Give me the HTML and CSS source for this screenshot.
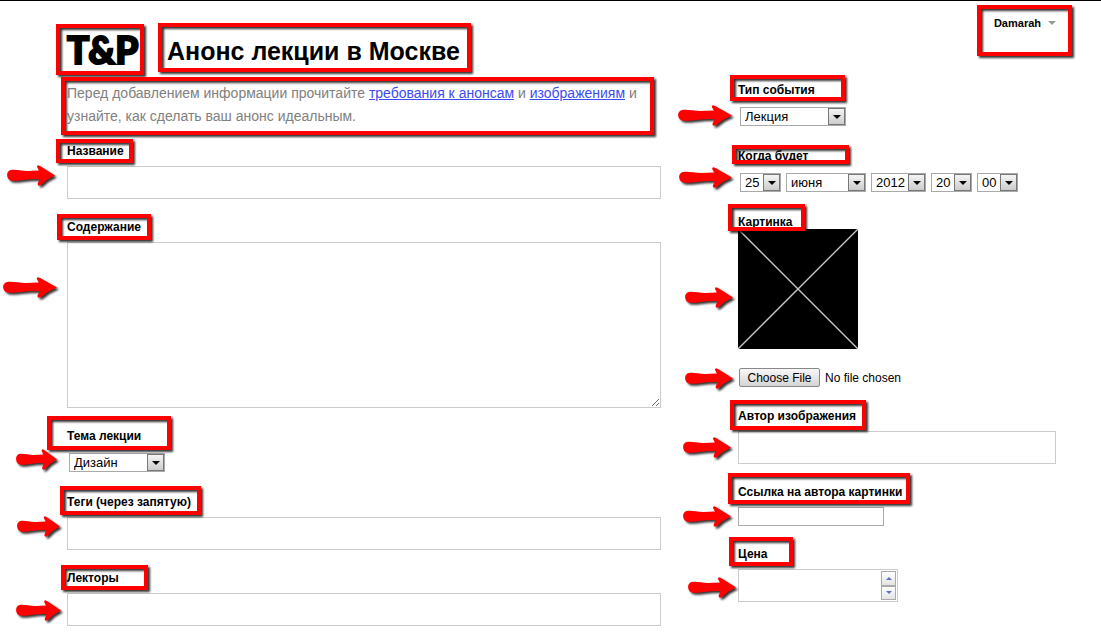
FILE: index.html
```html
<!DOCTYPE html>
<html lang="ru">
<head>
<meta charset="utf-8">
<meta name="viewport" content="width=device-width, initial-scale=1">
<title>Анонс лекции в Москве</title>
<link rel="stylesheet" href="styles.css">
</head>
<body>
<svg class="defs" aria-hidden="true">
  <symbol id="arrow" viewBox="0 0 48 21" preserveAspectRatio="none">
    <path d="M5 4.800C10 4.500 14 6 20 6L32 5.500L30 2Q30 -1 33 1Q41 6 48 10.500Q40 14 34 20Q31 22 30.500 19L32.500 14Q22 14 14 15.200Q9 16 5 15.800C-1.500 15 -1.500 5 5 4.800Z"/>
  </symbol>
</svg>
<form class="page">
  <main class="column">
    <header class="masthead">
      <a class="logo" href="#">T&amp;P<span class="mark mark-logo"></span></a>
      <h1 class="title">Анонс лекции в Москве<span class="mark mark-heading"></span></h1>
    </header>
    <p class="intro">Перед добавлением информации прочитайте <a href="#">требования к анонсам</a> и <a href="#">изображениям</a> и узнайте, как сделать ваш анонс идеальным.<span class="mark mark-intro"></span></p>
    <div class="fields">
      <div class="field">
        <label class="label" for="name">Название</label>
        <input class="text" id="name" type="text">
        <span class="mark mark-name"></span>
        <svg class="arrow arrow-name"><use href="#arrow"/></svg>
      </div>
      <div class="field">
        <label class="label" for="content">Содержание</label>
        <textarea class="text area" id="content"></textarea>
        <span class="mark mark-content"></span>
        <svg class="arrow arrow-content"><use href="#arrow"/></svg>
      </div>
      <div class="field">
        <label class="label" for="topic">Тема лекции</label>
        <div class="selects"><span class="select topic"><select id="topic"><option>Дизайн</option></select></span></div>
        <span class="mark mark-topic"></span>
        <svg class="arrow arrow-topic"><use href="#arrow"/></svg>
      </div>
      <div class="field">
        <label class="label" for="tags">Теги (через запятую)</label>
        <input class="text" id="tags" type="text">
        <span class="mark mark-tags"></span>
        <svg class="arrow arrow-tags"><use href="#arrow"/></svg>
      </div>
      <div class="field">
        <label class="label" for="lecturers">Лекторы</label>
        <input class="text" id="lecturers" type="text">
        <span class="mark mark-lecturers"></span>
        <svg class="arrow arrow-lecturers"><use href="#arrow"/></svg>
      </div>
    </div>
  </main>
  <aside class="column">
    <nav class="account">
      <a class="user" href="#">Damarah</a>
      <span class="mark mark-user"></span>
    </nav>
    <div class="fields">
      <div class="field">
        <label class="label" for="type">Тип события</label>
        <div class="selects"><span class="select type"><select id="type"><option>Лекция</option></select></span></div>
        <span class="mark mark-type"></span>
        <svg class="arrow arrow-type"><use href="#arrow"/></svg>
      </div>
      <div class="field">
        <label class="label" for="day">Когда будет</label>
        <div class="selects">
          <span class="select short"><select id="day"><option>25</option></select></span>
          <span class="select month"><select aria-label="Месяц"><option>июня</option></select></span>
          <span class="select year"><select aria-label="Год"><option>2012</option></select></span>
          <span class="select short"><select aria-label="Часы"><option>20</option></select></span>
          <span class="select short"><select aria-label="Минуты"><option>00</option></select></span>
        </div>
        <span class="mark mark-when"></span>
        <svg class="arrow arrow-when"><use href="#arrow"/></svg>
      </div>
      <div class="field">
        <label class="label label-tight" for="file">Картинка</label>
        <svg class="picture" viewBox="0 0 120 120" aria-hidden="true"><path d="M0 0H120V120H0Z"/><path class="cross" d="M0 0L120 120M120 0L0 120"/></svg>
        <input class="file" id="file" type="file">
        <span class="mark mark-picture"></span>
        <svg class="arrow arrow-picture"><use href="#arrow"/></svg>
        <svg class="arrow arrow-file"><use href="#arrow"/></svg>
      </div>
      <div class="field">
        <label class="label" for="author">Автор изображения</label>
        <input class="text" id="author" type="text">
        <span class="mark mark-author"></span>
        <svg class="arrow arrow-author"><use href="#arrow"/></svg>
      </div>
      <div class="field">
        <label class="label" for="link">Ссылка на автора картинки</label>
        <input class="text small" id="link" type="text">
        <span class="mark mark-link"></span>
        <svg class="arrow arrow-link"><use href="#arrow"/></svg>
      </div>
      <div class="field">
        <label class="label" for="price">Цена</label>
        <div class="number">
          <input id="price" type="number">
          <div class="steps">
            <button class="step up" type="button" aria-label="Больше"></button>
            <button class="step" type="button" aria-label="Меньше"></button>
          </div>
        </div>
        <span class="mark mark-price"></span>
        <svg class="arrow arrow-price"><use href="#arrow"/></svg>
      </div>
    </div>
  </aside>
</form>
</body>
</html>
```

FILE: styles.css
```css
*, ::before, ::after { box-sizing: border-box; }

body {
  margin: 0;
  border-top: 1px solid #000;
  background: #fff;
  color: #000;
  font-family: "Liberation Sans", Arial, sans-serif;
  font-size: 13px;
}

input, select, textarea, button { font: inherit; color: inherit; margin: 0; border-radius: 0; }

.defs { position: absolute; width: 0; height: 0; }

.page {
  display: grid;
  grid-template-columns: minmax(0, 594fr) minmax(0, 318fr);
  column-gap: 77px;
  padding: 0 45px 12px 67px;
}

/* Header */
.masthead { display: flex; align-items: flex-start; height: 81px; padding-top: 34px; }
.logo {
  position: relative;
  flex: 0 0 100px;
  color: #000;
  font-family: Lato, "Liberation Sans", sans-serif;
  font-size: 37px;
  font-weight: 900;
  line-height: 30px;
  text-decoration: none;
  -webkit-text-stroke: 2px #000;
}
.title { position: relative; margin: 0; font-size: 25px; line-height: 32px; white-space: nowrap; }
.account { position: relative; display: flex; justify-content: flex-end; height: 81px; padding-top: 14px; }
.user {
  display: flex;
  align-items: center;
  gap: 7px;
  height: 16px;
  color: #000;
  font-size: 11px;
  font-weight: bold;
  text-decoration: none;
}
.user::after { content: ""; border: 4px solid transparent; border-top-color: #999; border-bottom: 0; }

.intro { position: relative; margin: 0 0 15px; color: #808080; font-size: 14px; line-height: 23px; }
.intro a { color: #3d4cf0; }

/* Form */
.fields { display: flex; flex-direction: column; gap: 20px; }
.field { position: relative; display: flex; flex-direction: column; align-items: flex-start; }
.label { margin-bottom: 6px; font-size: 12px; font-weight: bold; line-height: 17px; }
.label-tight { margin-bottom: -2px; }
.text { display: block; width: 100%; height: 33px; padding: 4px; border: 1px solid #ccc; background: #fff; }
.area { height: 166px; resize: vertical; }
.small { width: 146px; height: 19px; border-color: #aaa; }

.selects { display: flex; gap: 5px; padding: 2px; }
.select { position: relative; height: 19px; }
.select select {
  display: block;
  width: 100%;
  height: 100%;
  padding: 0 18px 0 4px;
  border: 1px solid #a9a9a9;
  background: #fff;
  appearance: none;
}
.select::before {
  content: "";
  position: absolute;
  inset: 1px 1px 1px auto;
  width: 17px;
  border: 1px solid #777;
  background: linear-gradient(#f4f4f4, #ccc);
  pointer-events: none;
}
.select::after {
  content: "";
  position: absolute;
  top: 8px;
  right: 5px;
  border: 4px solid transparent;
  border-top-color: #000;
  border-bottom: 0;
  pointer-events: none;
}
.topic { width: 96px; }
.type { width: 106px; }
.short { width: 41px; }
.month { width: 80px; }
.year { width: 55px; }

.picture { width: 120px; height: 120px; margin-bottom: 19px; }
.cross { stroke: #c8c8c8; stroke-width: 1.4; }
.file { width: 100%; height: 20px; padding-left: 1px; font-size: 12px; line-height: 19px; }
.file::file-selector-button {
  width: 81px;
  height: 19px;
  margin-right: 5px;
  padding: 0;
  border: 1px solid #888;
  border-radius: 2px;
  background: linear-gradient(#f8f8f8, #d4d4d4);
  font: inherit;
}

.number { display: flex; width: 160px; height: 33px; padding: 1px; border: 1px solid #ccc; }
.number input { flex: 1; min-width: 0; padding: 4px; border: 0; appearance: textfield; }
.number input::-webkit-inner-spin-button { display: none; }
.steps { display: flex; flex-direction: column; width: 15px; }
.step {
  display: grid;
  flex: 1;
  place-items: center;
  padding: 0;
  border: 1px solid #aaa;
  background: linear-gradient(#fff, #e4e4e4);
}
.step::after { content: ""; border: 3px solid transparent; border-top-color: #5a6fc8; border-bottom: 0; }
.up::after { border: 3px solid transparent; border-top: 0; border-bottom-color: #5a6fc8; }

/* Annotations drawn over the form */
.mark {
  position: absolute;
  border: 4px solid #f00;
  filter: drop-shadow(2px 2px 1px rgba(0, 0, 0, 0.8));
  pointer-events: none;
}
.mark-logo { left: -11px; top: -11px; width: 88px; height: 51px; }
.mark-heading { left: -9px; top: -12px; width: 313px; height: 49px; }
.mark-intro { left: -6px; right: 7px; top: -5px; height: 58px; }
.mark-user { right: -16px; top: 4px; width: 95px; height: 51px; }
.mark-name { left: -11px; top: -4px; width: 77px; height: 24px; }
.mark-content { left: -10px; top: -5px; width: 94px; height: 26px; }
.mark-topic { left: -20px; top: -12px; width: 124px; height: 34px; }
.mark-tags { left: -7px; top: -8px; width: 141px; height: 29px; }
.mark-lecturers { left: -6px; top: -5px; width: 87px; height: 25px; }
.mark-type { left: -8px; top: -7px; width: 115px; height: 26px; }
.mark-when { left: -6px; top: -3px; width: 117px; height: 19px; }
.mark-picture { left: -10px; top: -10px; width: 77px; height: 27px; }
.mark-author { left: -8px; top: -8px; width: 136px; height: 30px; }
.mark-link { left: -10px; top: -11px; width: 182px; height: 31px; }
.mark-price { left: -9px; top: -9px; width: 64px; height: 29px; }

.arrow {
  position: absolute;
  width: 48px;
  height: 21px;
  overflow: visible;
  fill: #f00;
  filter: drop-shadow(2px 2px 1px rgba(0, 0, 0, 0.8));
  pointer-events: none;
}
.arrow-name { left: -60px; top: 22px; }
.arrow-content { left: -64px; top: 58px; width: 54px; }
.arrow-topic { left: -51px; top: 21px; width: 41px; }
.arrow-tags { left: -50px; top: 22px; width: 43px; }
.arrow-lecturers { left: -51px; top: 30px; width: 45px; }
.arrow-type { left: -60px; top: 23px; width: 54px; }
.arrow-when { left: -59px; top: 19px; width: 53px; }
.arrow-picture { left: -53px; top: 73px; }
.arrow-file { left: -53px; top: 154px; }
.arrow-author { left: -55px; top: 29px; }
.arrow-link { left: -55px; top: 22px; }
.arrow-price { left: -50px; top: 31px; }
```
